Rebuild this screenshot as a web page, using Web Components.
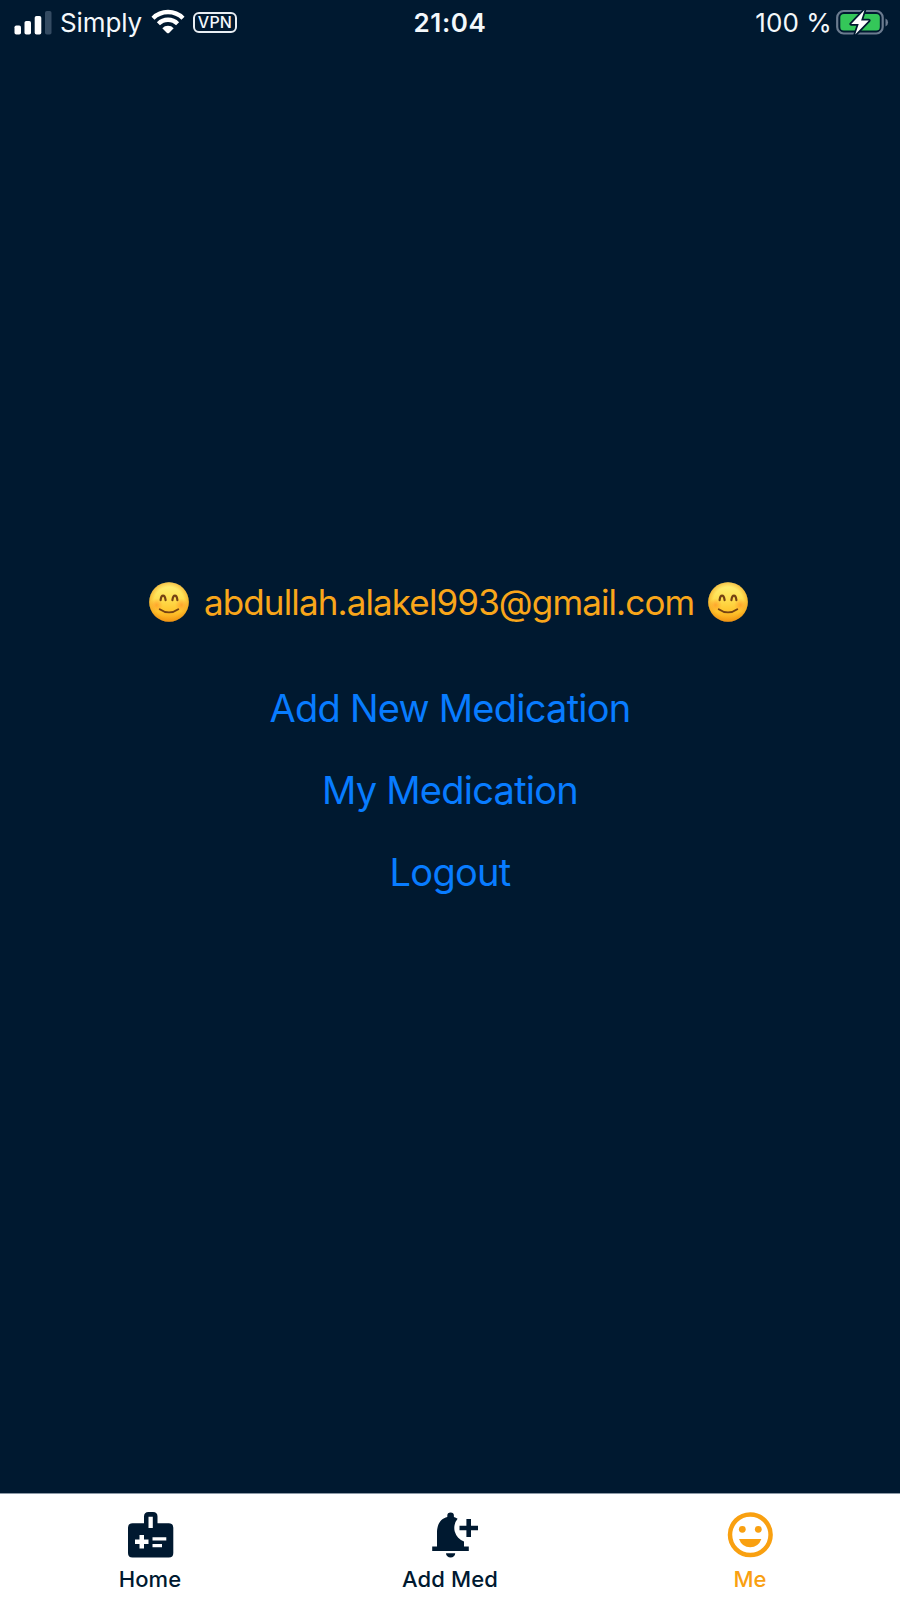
<!DOCTYPE html>
<html lang="en">
<head>
<meta charset="utf-8">
<title>Profile</title>
<style>
html,body{margin:0;height:100%;background:#001930}
body{font-family:Inter,"Liberation Sans",sans-serif}
</style>
</head>
<body>
<med-app></med-app>
<script>
function define(name, html) {
  const t = document.createElement('template');
  t.innerHTML = html;
  customElements.define(name, class extends HTMLElement {
    constructor() {
      super();
      this.attachShadow({ mode: 'open' }).append(t.content.cloneNode(true));
    }
  });
}

define('status-bar', `
<style>
:host{display:grid;grid-template-columns:1fr auto 1fr;height:45px;line-height:45px;font-size:26px;color:#f4f8fb;white-space:nowrap;align-items:center}
div{display:flex;align-items:center;height:45px}
svg{display:block;flex:none}
.l{padding-left:14px}
.carrier{margin-left:8px;width:82px;letter-spacing:-.1px}
.wifi{margin:0 0 2px 9px}
.vpn{margin-left:8px;box-sizing:border-box;width:44px;height:21px;border:2px solid #e9eef3;border-radius:6px;font-size:16px;line-height:17px;font-weight:500;text-align:center;letter-spacing:.2px}
.time{font-weight:600;letter-spacing:.6px}
.r{justify-content:flex-end;padding-right:11px}
.r svg{margin-bottom:1px}
.pct{margin-right:4px;letter-spacing:.1px}
</style>
<div class="l">
<svg width="38" height="26" viewBox="0 0 38 26"><g fill="#fff"><rect x=".5" y="15.500" width="6.500" height="9" rx="1.800"/><rect x="10.500" y="11" width="6.500" height="13.500" rx="1.800"/><rect x="20.700" y="6" width="6.600" height="18.500" rx="1.800"/></g><rect x="31" y="1" width="6.500" height="23.500" rx="1.800" fill="#344b62"/></svg>
<span class="carrier">Simply</span>
<svg class="wifi" width="34" height="26" viewBox="0 0 34 26"><g fill="none" stroke="#fff" stroke-width="4.300"><path d="M2 9.200a21.300 21.300 0 0 1 30 0"/><path d="M7.400 14.700a13.600 13.600 0 0 1 19.200 0"/></g><path d="M11.300 19.200a8 8 0 0 1 11.400 0L18 23.900q-1 .9-2 0z" fill="#fff"/></svg>
<span class="vpn">VPN</span>
</div>
<span class="time">21:04</span>
<div class="r"><span class="pct">100 %</span>
<svg width="53" height="28" viewBox="0 0 53 28"><rect x="1.200" y="3" width="45.500" height="22.500" rx="6.500" fill="none" stroke="#6b7b8f" stroke-width="2.200"/><rect x="4.300" y="6" width="39.500" height="16.500" rx="3.500" fill="#34c759"/><path d="M49.500 10.500q2.600 1 2.600 4t-2.600 4z" fill="#6b7b8f"/><path d="M28.500 2L15.200 16h7.500L19.200 26.500 32.800 12.500h-7.700z" fill="#fff" stroke="#001930" stroke-width="3.500" stroke-linejoin="round" paint-order="stroke"/></svg></div>`);

define('smile-emoji', `
<style>:host{display:block;width:40px;height:40px;flex:none}svg{display:block}</style>
<svg width="40" height="40" viewBox="0 0 40 40">
<defs>
<linearGradient id="b" x1="0" y1="0" x2="0" y2="1"><stop offset="0" stop-color="#fff27a"/><stop offset=".4" stop-color="#ffe052"/><stop offset=".75" stop-color="#ffc42c"/><stop offset="1" stop-color="#f59a16"/></linearGradient>
<radialGradient id="g"><stop offset=".75" stop-color="#f39a12" stop-opacity="0"/><stop offset="1" stop-color="#e98c12" stop-opacity=".5"/></radialGradient>
<radialGradient id="c"><stop offset="0" stop-color="#ff7a1c" stop-opacity=".5"/><stop offset="1" stop-color="#ff7a1c" stop-opacity="0"/></radialGradient>
</defs>
<circle cx="20" cy="20" r="19.800" fill="url(#b)"/><circle cx="20" cy="20" r="19.800" fill="url(#g)"/>
<circle cx="7.500" cy="23" r="6.500" fill="url(#c)"/><circle cx="32.500" cy="23" r="6.500" fill="url(#c)"/>
<g fill="none" stroke="#754213" stroke-linecap="round"><path d="M11.600 18.200c.7-6 4.200-6 5 0M23.400 18.200c.8-6 4.300-6 5 0" stroke-width="2.200"/><path d="M10.700 27.200q9.300 6.500 18.600 0" stroke-width="1.800"/></g>
</svg>`);

define('user-line', `
<style>:host{display:flex;justify-content:center;align-items:center;height:44px;line-height:44px;font-size:35px;letter-spacing:-.88px;color:#f9a61a;white-space:nowrap;padding-right:3px}
span{width:489px;margin:0 15px;text-align:center}</style>
<smile-emoji></smile-emoji><span><slot></slot></span><smile-emoji></smile-emoji>`);

define('action-link', `
<style>:host{display:block;height:82px;line-height:82px;text-align:center;font-size:38px;letter-spacing:-.75px;color:#087cff;white-space:nowrap}</style><slot></slot>`);

define('tab-item', `
<style>:host{display:flex;flex-direction:column;align-items:center;color:#001930;font-size:22px;font-weight:500;line-height:28px;letter-spacing:.1px;padding-top:16px}
:host([active]){color:#f9a010}
::slotted(svg){display:block;width:50px;height:50px;overflow:visible;fill:currentColor;margin-bottom:5px}</style>
<slot name="icon"></slot><span><slot></slot></span>`);

define('tab-bar', `
<style>:host{display:grid;grid-template-columns:repeat(3,1fr);height:106px;background:#fff;border-top:1px solid #8c99a6}</style>
<tab-item><svg slot="icon" viewBox="25 25 50 50"><path fill-rule="evenodd" d="M44 38.300V31.500q0-4.500 4.500-4.500h4.500q4.500 0 4.500 4.500V38.300H68.800q4.500 0 4.500 4.500V68q0 4.500-4.500 4.500H32.500q-4.500 0-4.500-4.500V42.800q0-4.500 4.500-4.500zM48.500 31.700V43h4.300V31.700zM39.500 50v4.500H35v4.500h4.500v4.500h4.500V59h4.500V54.500H44V50zM52.500 52.300v3.300H66.300v-3.300zM52.500 59v3.300H62V59z"/></svg>Home</tab-item>
<tab-item><svg slot="icon" viewBox="35 25 50 50"><path d="M57.300 30.700a3.300 3.300 0 0 1 6.600 0v1.400q2 .5 3.700 1.700A14.300 14.300 0 0 0 74 56.500V61.500h4.800V66H42.200v-4.500H47V47.500C47 39 51 33.500 57.300 32.100zM56 68.200h9.200a4.600 4.400 0 0 1-9.200 0z"/><path d="M76.400 34h4.600v6.700h7v4.600h-7V52h-4.600v-6.700h-6.900v-4.600h6.900z"/></svg>Add Med</tab-item>
<tab-item active><svg slot="icon" viewBox="25 25 50 50"><circle cx="50.300" cy="49.800" r="20.300" fill="none" stroke="currentColor" stroke-width="4.500"/><circle cx="42.300" cy="44.300" r="3.400"/><circle cx="58.300" cy="44.300" r="3.400"/><path d="M39 54h22.400q-3 8.200-11.200 8.200T39 54z"/></svg>Me</tab-item>`);

define('med-app', `
<style>:host{display:flex;flex-direction:column;width:900px;height:1600px;background:#001930;overflow:hidden}
main{flex:1;box-sizing:border-box;padding-top:535px}
nav{margin-top:43px}tab-bar{flex:none}</style>
<status-bar></status-bar>
<main><user-line>abdullah.alakel993@gmail.com</user-line>
<nav><action-link>Add New Medication</action-link><action-link>My Medication</action-link><action-link>Logout</action-link></nav></main>
<tab-bar></tab-bar>`);
</script>
</body>
</html>
